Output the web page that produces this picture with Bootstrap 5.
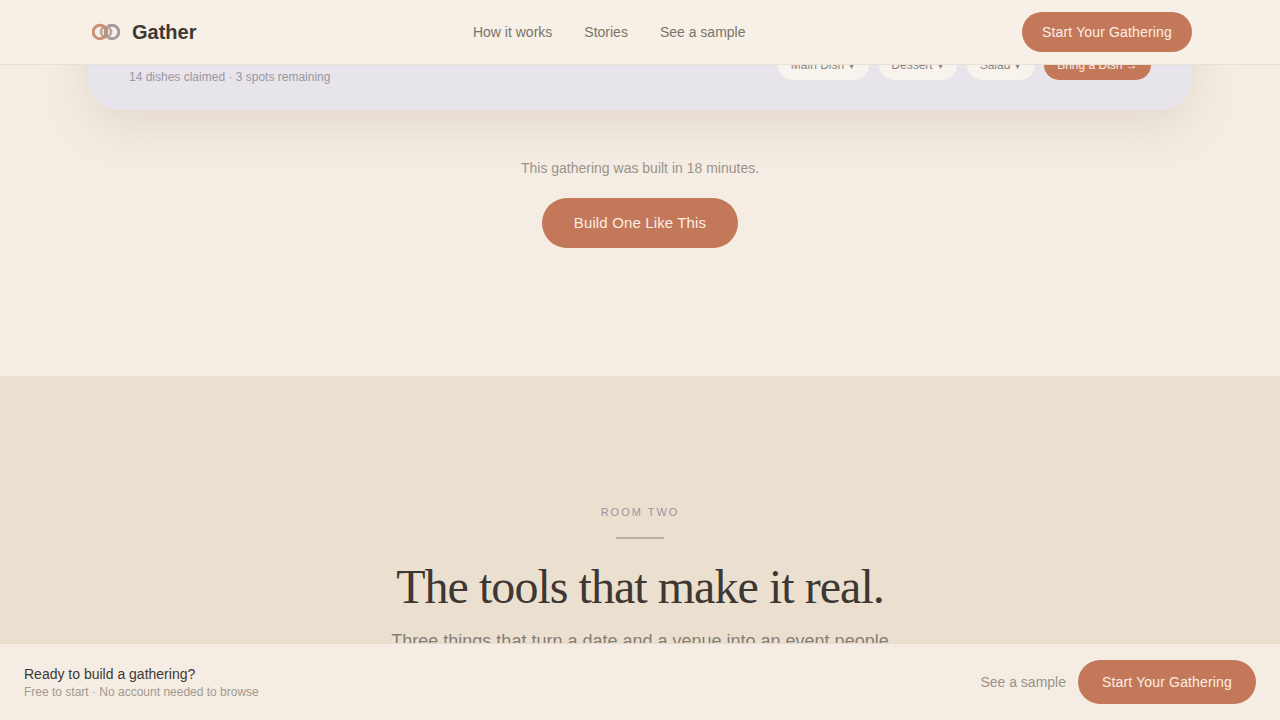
<!DOCTYPE html>
<html lang="en">
<head>
<meta charset="utf-8">
<title>Gather</title>
<link href="https://cdn.jsdelivr.net/npm/bootstrap@5.3.0/dist/css/bootstrap.min.css" rel="stylesheet">
<style>
html,body{height:720px;overflow:hidden}
body{font-family:"Liberation Sans",Arial,sans-serif;background:#f5ede4;color:#3d3833}
.top-bar{position:fixed;top:0;left:0;right:0;height:65px;background:#f7f0e7;border-bottom:1px solid #e8e0d4;z-index:10;padding:0 88px 0 92px}
.brand-name{font-size:20px;font-weight:700;color:#3d3833;text-decoration:none;gap:12px}
.top-links{gap:32px}
.top-links a{font-size:14px;color:#7a7369;text-decoration:none}
.pill-cta{background:#c4785a;color:#fbeee4;border:0;border-radius:50rem;text-decoration:none;display:inline-flex;align-items:center;justify-content:center;letter-spacing:.15px}
.pill-nav{width:170px;height:40px;font-size:14px}
.pill-big{width:196px;height:50px;font-size:15px;letter-spacing:.14px}
.pill-foot{width:178px;height:44px;font-size:14px}
.hero-zone{height:376px;background:#f5ede4}
.sample-panel{margin:0 88px;height:110px;background:#e8e4ec;border-radius:0 0 32px 32px;box-shadow:0 16px 48px rgba(120,100,70,.15);padding:0 41px 30px}
.panel-meta{font-size:12px;color:#9a97a0;line-height:18px;margin-bottom:-6px}
.chip-set{gap:10px}
.dish-chip{height:30px;border-radius:50rem;background:#f8f3ec;color:#8a857f;font-size:12px;display:flex;align-items:center;justify-content:center;padding-right:2px}
.dish-main{width:91px}.dish-dessert{width:78px}.dish-salad{width:68px}
.dish-bring{width:107px;background:#c4785a;color:#fbeee4;margin-left:-1px;padding-right:0}
.chip-caret{font-size:10px;margin-left:5px}
.built-note{font-size:14px;color:#9a9389;line-height:20px;margin:48px 0 20px}
.tools-zone{background:#ebe0cf;height:344px;padding-top:128px}
.room-tag{font-size:11px;letter-spacing:2px;color:#a2919f;line-height:16px;font-weight:400}
.room-rule{width:48px;height:2px;background:#bfb0a5;margin:17px auto 0}
.tools-title{font-family:"Liberation Serif","Times New Roman",serif;font-weight:400;font-size:48px;letter-spacing:-.96px;line-height:58px;color:#3d3833;margin:19px 0 0}
.tools-sub{font-size:18px;color:#857e75;line-height:27px;margin:12px 0 0}
.foot-bar{position:fixed;left:0;right:0;bottom:0;height:77px;background:#f5ede3;border-top:1px solid #e6dccd;z-index:10;padding:0 24px}
.foot-title{font-size:14px;line-height:20px;color:#3d3833}
.foot-sub{font-size:12px;line-height:16px;color:#a09a90}
.foot-link{font-size:14px;color:#9a9389;text-decoration:none}
</style>
</head>
<body>
<nav class="top-bar d-flex align-items-center justify-content-between">
  <a href="#" class="brand-name d-flex align-items-center">
    <svg width="28" height="20" viewBox="0 0 28 20" fill="none" aria-hidden="true">
      <circle cx="20" cy="10" r="6.8" stroke="#a39aa5" stroke-width="3"/>
      <circle cx="14" cy="10" r="5" stroke="#b5a79c" stroke-width="2.6"/>
      <circle cx="8" cy="10" r="6.8" stroke="#c98670" stroke-width="3" opacity=".9"/>
    </svg>
    <span>Gather</span>
  </a>
  <div class="top-links d-flex">
    <a href="#">How it works</a>
    <a href="#">Stories</a>
    <a href="#">See a sample</a>
  </div>
  <a href="#" class="pill-cta pill-nav">Start Your Gathering</a>
</nav>

<main>
  <section class="hero-zone">
    <div class="sample-panel d-flex align-items-end justify-content-between">
      <div class="panel-meta">14 dishes claimed · 3 spots remaining</div>
      <div class="chip-set d-flex">
        <span class="dish-chip dish-main">Main Dish<span class="chip-caret">▾</span></span>
        <span class="dish-chip dish-dessert">Dessert<span class="chip-caret">▾</span></span>
        <span class="dish-chip dish-salad">Salad<span class="chip-caret">▾</span></span>
        <span class="dish-chip dish-bring">Bring a Dish →</span>
      </div>
    </div>
    <div class="text-center">
      <p class="built-note">This gathering was built in 18 minutes.</p>
      <a href="#" class="pill-cta pill-big">Build One Like This</a>
    </div>
  </section>
  <section class="tools-zone text-center">
    <div class="room-tag">ROOM TWO</div>
    <div class="room-rule"></div>
    <h2 class="tools-title">The tools that make it real.</h2>
    <p class="tools-sub">Three things that turn a date and a venue into an event people</p>
  </section>
</main>

<footer class="foot-bar d-flex align-items-center justify-content-between">
  <div>
    <div class="foot-title">Ready to build a gathering?</div>
    <div class="foot-sub">Free to start · No account needed to browse</div>
  </div>
  <div class="d-flex align-items-center gap-2">
    <a href="#" class="foot-link me-1">See a sample</a>
    <a href="#" class="pill-cta pill-foot">Start Your Gathering</a>
  </div>
</footer>
<script src="https://cdn.jsdelivr.net/npm/bootstrap@5.3.0/dist/js/bootstrap.bundle.min.js"></script>
</body>
</html>
